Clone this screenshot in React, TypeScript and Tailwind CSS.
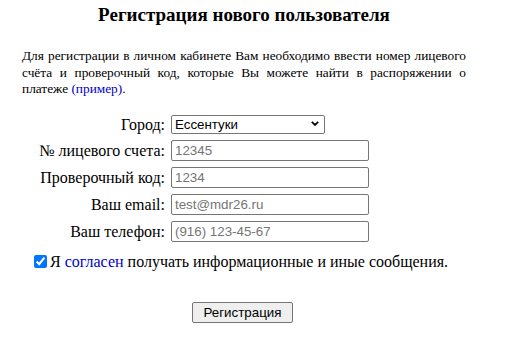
import { useState } from 'react'

const serif = "font-['Liberation_Serif','Times_New_Roman',serif]"
const sans = "font-['Liberation_Sans',Arial,sans-serif]"

const fields = [
    { label: '№ лицевого счета:', placeholder: '12345' },
    { label: 'Проверочный код:', placeholder: '1234' },
    { label: 'Ваш email:', placeholder: 'test@mdr26.ru' },
    { label: 'Ваш телефон:', placeholder: '(916) 123-45-67' },
]

export default function App() {
    const [agree, setAgree] = useState(true)
    const [city, setCity] = useState('Ессентуки')

    return (
        <div className={`min-h-[345px] w-[515px] bg-white text-black ${serif}`}>
            <div className="ml-[22px] w-[444px] pt-[4px]">
                <h1 className="text-center text-[19px] leading-[22px] font-bold">
                    Регистрация нового пользователя
                </h1>

                <p className="mt-[22px] text-justify text-[13.33px] leading-[16.5px]">
                    Для регистрации в личном кабинете Вам необходимо ввести
                    номер лицевого счёта и проверочный код, которые Вы можете
                    найти в распоряжении о{' '}
                    <span className="whitespace-nowrap">
                        платеже{' '}
                        <a href="#" className="text-[#0000cc]">
                            (пример)
                        </a>
                        .
                    </span>
                </p>

                {/* Form rows */}
                <div className="mt-[17px] flex flex-col gap-[6px]">
                    <div className="flex items-center gap-[6px]">
                        <label className="w-[143px] text-right text-[16px] leading-[19px]">
                            Город:
                        </label>
                        <div className="relative">
                            <select
                                value={city}
                                onChange={(e) => setCity(e.target.value)}
                                className={`block h-[19px] w-[154px] appearance-none rounded-[2px] border border-[#767676] pl-[3px] text-[13.33px] leading-[17px] ${sans}`}
                            >
                                <option>Ессентуки</option>
                                <option>Пятигорск</option>
                                <option>Кисловодск</option>
                            </select>
                            <svg
                                viewBox="0 0 8 5"
                                className="pointer-events-none absolute top-[6px] right-[6px] h-[5px] w-[8px]"
                            >
                                <path
                                    d="M0.8 0.8 L4 3.9 L7.2 0.8"
                                    fill="none"
                                    stroke="#000"
                                    strokeWidth="1.8"
                                />
                            </svg>
                        </div>
                    </div>
                    {fields.map((f) => (
                        <div key={f.label} className="flex items-center gap-[6px]">
                            <label className="w-[143px] text-right text-[16px] leading-[19px]">
                                {f.label}
                            </label>
                            <input
                                placeholder={f.placeholder}
                                className={`h-[21px] w-[198px] rounded-[2px] border border-[#767676] px-[3px] text-[13.33px] placeholder:text-[#757575] ${sans}`}
                            />
                        </div>
                    ))}
                </div>

                <div className="mt-[10px] flex items-center pl-[12px] text-[16px] leading-[19px]">
                    <input
                        type="checkbox"
                        checked={agree}
                        onChange={(e) => setAgree(e.target.checked)}
                        className="mr-[3px] h-[13px] w-[13px] accent-[#0075ff]"
                    />
                    <span>
                        Я{' '}
                        <a href="#" className="text-[#0000cc]">
                            согласен
                        </a>{' '}
                        получать информационные и иные сообщения.
                    </span>
                </div>

                <div className="mt-[31px] flex justify-center pr-[3px]">
                    <button
                        className={`h-[21px] w-[101px] rounded-[2px] border border-[#767676] bg-[#efefef] text-[13.33px] ${sans}`}
                    >
                        Регистрация
                    </button>
                </div>
            </div>
        </div>
    )
}
